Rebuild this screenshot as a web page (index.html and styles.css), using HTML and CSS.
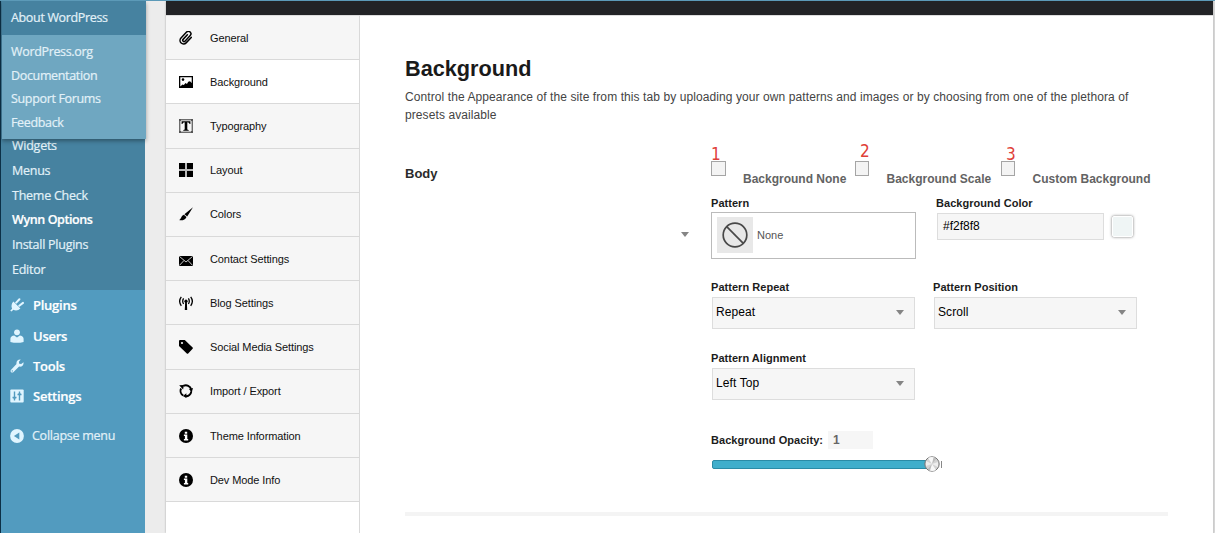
FILE: index.html
```
<!DOCTYPE html>
<html lang="en">
<head>
<meta charset="utf-8">
<title>Wynn Options</title>
<link rel="stylesheet" href="styles.css">
</head>
<body>
<div class="page">
  <aside class="admin">
    <div class="flyout">
      <div class="flyout-head">About WordPress</div>
      <div class="flyout-list"><a>WordPress.org</a><a>Documentation</a><a>Support Forums</a><a>Feedback</a></div>
    </div>
    <nav class="submenu"><a>Widgets</a><a>Menus</a><a>Theme Check</a><a class="current">Wynn Options</a><a>Install Plugins</a><a>Editor</a></nav>
    <nav class="menu">
      <a><svg width="14" height="14" viewBox="0 0 14 14"><path d="M3.400 3.600 10.400 10.600C8.300 12.600 5.400 13 3.400 11.700L1.500 13.600.2 12.700 2.100 10.700C1 8.500 1.500 5.500 3.400 3.600z"/><path d="M6.200 4.600 9.400 1.200M9.300 7.800 13 4.900" fill="none" stroke="#e0f5ff" stroke-width="2" stroke-linecap="round"/></svg>Plugins</a>
      <a><svg width="14" height="14" viewBox="0 0 14 14"><circle cx="7" cy="3.300" r="2.900"/><path d="M.4 13V9.800C.4 7.800 2.200 6.700 4.200 6.500L7 8.600 9.800 6.500C11.800 6.700 13.600 7.800 13.600 9.800V13Q7 14.700.4 13z"/></svg>Users</a>
      <a><svg width="14" height="14" viewBox="0 0 14 14"><path d="M10.700.5 8.900 2.700 9.200 4.700 11.200 5 13.500 3.200C14 6 11.800 8.200 9.100 7.600L3.300 13.200C1.800 14.400-.2 12.500.9 11L6.500 5.100C5.900 2.300 8 .1 10.700.5z"/><circle cx="2.300" cy="11.900" r=".7" fill="#529bbf"/></svg>Tools</a>
      <a><svg width="14" height="14" viewBox="0 0 14 14"><rect x=".3" y=".5" width="13.400" height="13" rx="1"/><path d="M4.500 2.500V11.500M9.500 2.500V11.500M2.500 8.500H6.500M7.500 5.500H11.500" stroke="#529bbf" stroke-width="1.400"/><path d="M3 8.500H6L4.500 11zM8 5.500H11L9.500 3z" fill="#529bbf"/></svg>Settings</a>
      <a class="collapse"><svg width="14" height="14" viewBox="0 0 14 14"><circle cx="7" cy="7" r="6.900"/><path d="M9.300 3.400V10.600L3.900 7z" fill="#529bbf"/></svg>Collapse menu</a>
    </nav>
  </aside>
  <main class="panel">
    <header class="bar"></header>
    <div class="cols">
      <nav class="tabs">
        <a><svg width="14" height="14" viewBox="0 0 14 14"><g transform="rotate(43 7 7)" fill="none" stroke="#000" stroke-width="1.500" stroke-linecap="round"><path d="M10.400 3V10.500A3.500 3.500 0 0 1 3.400 10.500V2.300A2.500 2.500 0 0 1 8.400 2.300V10A1.300 1.300 0 0 1 5.800 10V3.700"/></g></svg>General</a>
        <a class="active"><svg width="14" height="14" viewBox="0 0 14 14"><path d="M0 1H14V13H0z"/><path d="M1.300 2.300H12.700V8L11 6.200 9.200 6.700 8 8.900 6.600 8 4.800 10 3.500 9.500 1.300 11.500z" fill="#fff"/><circle cx="4" cy="4.600" r="1.300"/></svg>Background</a>
        <a><svg width="14" height="14" viewBox="0 0 14 14"><rect x=".8" y=".8" width="12.400" height="12.400" fill="none" stroke="#333"/><path d="M0 0H2V2H0zM12 0H14V2H12zM0 12H2V14H0zM12 12H14V14H12z" fill="#555"/><path d="M2.600 2.200H11.400V5H10.600Q10.400 3.300 8.300 3.300V10.300Q8.300 11 9.700 11.100V11.800H4.300V11.100Q5.700 11 5.700 10.300V3.300Q3.600 3.300 3.400 5H2.600z"/></svg>Typography</a>
        <a><svg width="14" height="14" viewBox="0 0 14 14"><path d="M0 0H14V14H0z" fill="#bbb"/><path d="M0 0H6V6H0zM8 0H14V6H8zM0 8H6V14H0zM8 8H14V14H8z"/></svg>Layout</a>
        <a><svg width="14" height="14" viewBox="0 0 14 14"><path d="M14 .3 8.200 9.400 5.400 7.200zM4.900 7.700 7.500 9.900C6.500 12.700 3 13.900 0 13 2.300 12.200 2.100 8.600 4.900 7.700z"/></svg>Colors</a>
        <a><svg width="14" height="14" viewBox="0 0 14 14"><path d="M0 4H14V14H0z"/><path d="M.3 4.300 7 10 13.700 4.300M.3 13.500 5 8.500M13.700 13.500 9 8.500" fill="none" stroke="#ddd" stroke-width=".9"/></svg>Contact Settings</a>
        <a><svg width="14" height="14" viewBox="0 0 14 14"><circle cx="7" cy="5.200" r="1.600"/><path d="M6.200 5H7.800L8.200 14H5.800z"/><path d="M4.600 2.400Q2.800 5.200 4.600 8M9.400 2.400Q11.200 5.200 9.400 8M2.300.8Q-1 5.200 2.300 9.800M11.700.8Q15 5.200 11.700 9.800" fill="none" stroke="#000" stroke-width="1.300"/></svg>Blog Settings</a>
        <a><svg width="14" height="14" viewBox="0 0 14 14"><path d="M.7 0H5.800L13.600 7.400Q14.300 8 13.600 8.700L9.200 13.400Q8.500 14 7.800 13.400L0 6V.7z"/><circle cx="3" cy="3" r="1.100" fill="#f6f6f6"/></svg>Social Media Settings</a>
        <a><svg width="14" height="14" viewBox="0 0 14 14"><path d="M4.300 1.900A5.400 5.400 0 0 1 12.200 5.700M12.300 7.300A5.400 5.400 0 0 1 6.500 12.200M4.200 11.500A5.400 5.400 0 0 1 2.100 4.500" fill="none" stroke="#000" stroke-width="1.900"/><path d="M.2 1.200 4.900 1 4.100 5.400zM10 5.100 14 4 12.700 8.500zM7.400 9.300V14L3.800 12z"/></svg>Import / Export</a>
        <a class="low"><svg width="14" height="14" viewBox="0 0 14 14"><circle cx="7" cy="7" r="7"/><path d="M5.800 2.700H8.200V4.700H5.800zM4.900 5.600H8.300V10H9.200V11.400H4.900V10H5.900V7H4.900z" fill="#fff"/></svg>Theme Information</a>
        <a class="low"><svg width="14" height="14" viewBox="0 0 14 14"><circle cx="7" cy="7" r="7"/><path d="M5.800 2.700H8.200V4.700H5.800zM4.900 5.600H8.300V10H9.200V11.400H4.900V10H5.900V7H4.900z" fill="#fff"/></svg>Dev Mode Info</a>
      </nav>
      <section class="content">
        <h1>Background</h1>
        <p class="desc">Control the Appearance of the site from this tab by uploading your own patterns and images or by choosing from one of the plethora of<br>presets available</p>
        <div class="field">
          <div class="field-name">Body</div>
          <div class="controls">
            <span class="caret outer"></span>
            <div class="checks">
              <label class="c1"><i class="box"><b>1</b></i><span>Background None</span></label>
              <label class="c2"><i class="box"><b>2</b></i><span>Background Scale</span></label>
              <label class="c3"><i class="box"><b>3</b></i><span>Custom Background</span></label>
            </div>
            <div class="row first">
              <div class="cell">
                <div class="lbl">Pattern</div>
                <div class="pattern"><span class="thumb"><svg width="26" height="26" viewBox="0 0 26 26" fill="none" stroke="#484848" stroke-width="1.700"><circle cx="13" cy="13" r="11.800"/><path d="M4.700 4.700 21.300 21.300"/></svg></span>None</div>
              </div>
              <div class="cell color">
                <div class="lbl">Background Color</div>
                <div class="color-line"><div class="hex">#f2f8f8</div><div class="swatch"></div></div>
              </div>
            </div>
            <div class="row">
              <div class="cell"><div class="lbl">Pattern Repeat</div><div class="select">Repeat<span class="caret"></span></div></div>
              <div class="cell"><div class="lbl">Pattern Position</div><div class="select">Scroll<span class="caret"></span></div></div>
            </div>
            <div class="row">
              <div class="cell"><div class="lbl">Pattern Alignment</div><div class="select">Left Top<span class="caret"></span></div></div>
            </div>
            <div class="opacity"><span class="lbl">Background Opacity:</span><span class="num">1</span></div>
            <div class="slider"><div class="track"></div><svg class="knob" width="16" height="16" viewBox="0 0 16 16"><circle cx="8" cy="8" r="7.200" fill="#d3d3d3" stroke="#777"/><path d="M8 8 4 2Q8 0 11 2zM8 8 12 14Q8 16 5 14z" fill="#f8f8f8"/><path d="M8 8 2 5V10zM8 8 14 6V11z" fill="#eee"/><path d="M8 8 9.500 1.500 12 3zM8 8 6 14.500 4 13z" fill="#bbb"/></svg><i class="end"></i></div>
          </div>
        </div>
        <hr>
      </section>
    </div>
  </main>
</div>
</body>
</html>
```
FILE: styles.css
```
* { box-sizing: border-box; }
body { margin: 0; background: #ececec; font-family: "Liberation Sans", Arial, sans-serif; }
svg { display: block; flex: none; }
.page { display: flex; width: 1215px; height: 533px; overflow: hidden; border-top: 1px solid #5c9ab8; }

/* admin menu */
.admin { position: relative; width: 145px; flex: none; background: #529bbf; border-left: 1px solid #0c3046; font-family: "Open Sans", sans-serif; font-size: 12.5px; letter-spacing: -.25px; color: #e2f1f8; -webkit-text-stroke: .2px; }
.flyout { position: absolute; left: 1px; top: 0; width: 144px; height: 138px; background: #6fa7c1; box-shadow: 0 2px 4px rgba(0,0,0,.35); letter-spacing: -.34px; }
.flyout-head { height: 34px; padding-left: 9px; line-height: 33px; background: #4682a0; }
.flyout-list { display: flex; flex-direction: column; padding: 5px 0 0 9px; }
.flyout-list a { height: 23.700px; line-height: 24px; }
.submenu { display: flex; flex-direction: column; height: 289px; padding: 132px 0 0 11px; background: #4682a0; }
.submenu a { height: 24.800px; line-height: 25px; }
.submenu .current { font-weight: 600; letter-spacing: -.4px; color: #fff; }
.menu { display: flex; flex-direction: column; }
.menu a { display: flex; align-items: center; gap: 9px; height: 30.400px; padding-left: 9px; color: #fff; font-weight: 600; font-size: 13px; }
.menu svg { fill: #e0f5ff; }
.menu .collapse { margin-top: 9px; gap: 8px; font-weight: 400; font-size: 12.500px; color: #e2f1f8; }

/* options panel */
.panel { width: 1048px; flex: none; margin-left: 21px; background: #fff; border-right: 1px solid #ccc; box-shadow: 0 0 2px rgba(0,0,0,.3); }
.bar { height: 14px; background: #222326; }
.cols { display: flex; height: 519px; }
.tabs { width: 194px; flex: none; border-top: 1px solid #ddd; border-right: 1px solid #d9d9d9; }
.tabs a { display: flex; align-items: center; gap: 17px; height: 44.200px; padding-left: 13px; background: #f6f6f6; border-bottom: 1px solid #d9d9d9; font-size: 11px; letter-spacing: -.1px; color: #111; }
.tabs .active { background: #fff; }
.tabs .low { padding-top: 1.500px; }
.content { flex: 1; padding: 40px 45px 0; border-top: 1px solid #ddd; }
h1 { margin: 0; font-size: 21.700px; line-height: 25px; color: #1a1a1a; }
.desc { margin: 7px 0 0; font-size: 12px; line-height: 18px; letter-spacing: .088px; color: #444; white-space: nowrap; }
.field { display: flex; height: 388px; }
.field-name { width: 306px; padding-top: 42px; font-size: 13px; line-height: 15px; font-weight: bold; color: #2b2b2b; }
.controls { position: relative; flex: 1; padding-top: 37px; }
.checks { display: flex; height: 34px; }
.checks label { display: flex; white-space: nowrap; font-size: 12px; font-weight: bold; color: #636363; }
.checks .c1 { width: 144px; }
.checks .c2 { width: 146px; }
.checks span { padding: 10px 0 0 17px; line-height: 16px; }
.checks .c2 span, .checks .c3 span { padding-left: 17.500px; }
.box { position: relative; width: 15px; height: 15px; background: #f4f4f4; border: 1px solid #a5a5a5; flex: none; }
.c2 .box, .c3 .box { width: 14px; }
.box b { position: absolute; left: -1px; bottom: 11px; font: 17px/20px "DejaVu Sans Condensed", "DejaVu Sans", sans-serif; color: #df4038; }
.c2 .box b { left: 4px; bottom: 14px; }
.c3 .box b { left: 4px; }
.row { display: flex; gap: 19px; height: 71px; }
.row.first { height: 84px; gap: 20px; }
.cell { width: 203px; }
.first .cell { width: 205px; }
.lbl { font-size: 11px; line-height: 16px; height: 17px; font-weight: bold; letter-spacing: .04px; color: #1c1c1c; white-space: nowrap; }
.pattern { display: flex; align-items: center; gap: 4px; height: 47px; padding: 0 0 2px 5px; border: 1px solid #bbb; font-size: 11px; color: #555; }
.thumb { display: flex; align-items: center; justify-content: center; width: 36px; height: 36px; background: #e8e8e8; }
.color-line { display: flex; gap: 8px; margin: 1px 0 0 1px; }
.hex { width: 167px; flex: none; height: 27px; padding-left: 5px; line-height: 24px; font-size: 12px; background: #f6f6f6; border: 1px solid #ddd; color: #000; }
.swatch { width: 21px; height: 21px; flex: none; margin-top: 3px; background: #eff5f5; border: 1px solid #fff; border-radius: 2px; box-shadow: 0 0 3px #777; }
.select { display: flex; align-items: center; justify-content: space-between; width: 203px; height: 32px; margin: 1px 0 0 1px; padding: 0 10px 2px 3px; background: #f6f6f6; border: 1px solid #ddd; font-size: 12px; letter-spacing: .1px; color: #000; }
.caret { border: 4.500px solid transparent; border-top: 5px solid #858585; border-bottom: 0; }
.outer { position: absolute; left: -30px; top: 108px; }
.opacity { display: flex; gap: 4px; height: 27px; padding-top: 7px; margin-top: 3px; }
.opacity .lbl { width: 113px; line-height: 18px; }
.num { width: 45px; height: 18px; padding-left: 5px; background: #f6f6f6; font-size: 12px; line-height: 19px; font-weight: bold; color: #666; }
.slider { position: relative; padding: 9px 0 0 1px; }
.track { width: 222px; height: 9px; background: #40aecb; border: 1px solid #2b8ba6; border-radius: 2px; }
.knob { position: absolute; left: 213px; top: 5px; }
.end { position: absolute; left: 230px; top: 10px; width: 1px; height: 7px; background: #888; }
hr { margin: 0; height: 4px; border: 0; background: #f4f4f4; }
```
